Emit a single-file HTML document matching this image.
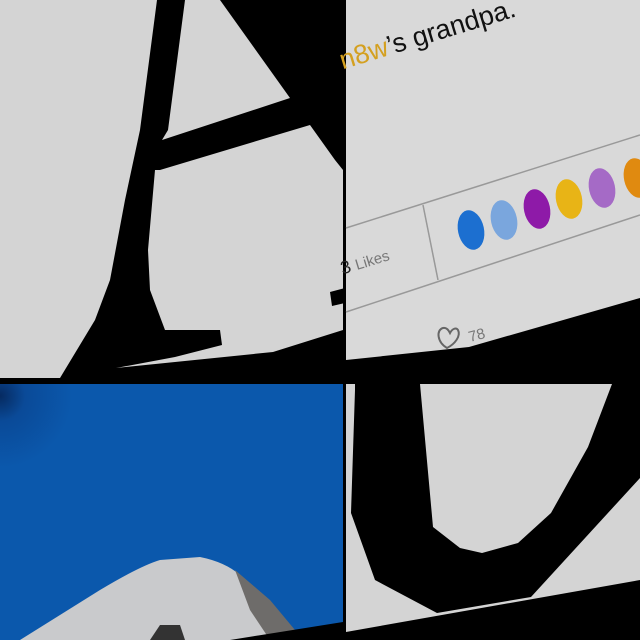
<!DOCTYPE html>
<html><head><meta charset="utf-8"><style>html,body{margin:0;padding:0;background:#000}svg{display:block}</style></head><body>
<svg width="640" height="640" viewBox="0 0 640 640" xmlns="http://www.w3.org/2000/svg">
<rect width="640" height="640" fill="#000"/>
<rect x="0" y="0" width="343" height="380" fill="#d4d4d4"/>
<path d="M157,0 L140,130 L125,200 L110,280 L95,320 L60,378 L0,380 L0,640 L343,640 L343,330 L273,352 L116,368 L175,357 L222,345 L220,330 L165,330 L150,290 L148,250 L155,170 L160,170 L310,125 L335,160 L343,170 L343,0 L220,0 L290,98 L162,140 L168,130 L185,0 Z" fill="#000"/>
<rect x="0" y="378" width="343" height="10" fill="#000"/>
<path d="M330,292 L345,288 L345,303 L332,306 Z" fill="#000"/>
<rect x="346" y="0" width="294" height="380" fill="#d9d9d9"/>
<path d="M346,360 L469,347 L640,298 L640,384 L346,384 Z" fill="#000"/>
<g transform="rotate(-17 346 60)">
<text x="340" y="68" font-family="'Liberation Sans',sans-serif" font-size="27" fill="#111"><tspan fill="#d4a020">n8w</tspan>’s grandpa.</text>
</g>
<line x1="346" y1="228" x2="640" y2="135" stroke="#999" stroke-width="1.5"/>
<line x1="346" y1="312" x2="640" y2="215" stroke="#999" stroke-width="1.5"/>
<line x1="423" y1="205" x2="438" y2="280" stroke="#999" stroke-width="1.5"/>
<g transform="rotate(-17 346 265)">
<text x="340" y="273" font-family="'Liberation Sans',sans-serif" font-size="18" fill="#222">3 <tspan fill="#777" font-size="15">Likes</tspan></text>
</g>
<ellipse cx="471" cy="230" rx="13" ry="20" fill="#1c6fd0" transform="rotate(-12 471 230)"/>
<ellipse cx="504" cy="220" rx="13" ry="20" fill="#7aa6dd" transform="rotate(-12 504 220)"/>
<ellipse cx="537" cy="209" rx="13" ry="20" fill="#8e1aa8" transform="rotate(-12 537 209)"/>
<ellipse cx="569" cy="199" rx="13" ry="20" fill="#e8b416" transform="rotate(-12 569 199)"/>
<ellipse cx="602" cy="188" rx="13" ry="20" fill="#a56ac6" transform="rotate(-12 602 188)"/>
<ellipse cx="637" cy="178" rx="13" ry="20" fill="#e08a10" transform="rotate(-12 637 178)"/>
<path d="M447,348 C437,342 436,330 443,328 C447,327 449,331 450,333 C452,329 456,327 458,330 C461,336 455,344 447,348 Z" fill="none" stroke="#666" stroke-width="2"/>
<text x="470" y="342" font-family="'Liberation Sans',sans-serif" font-size="15" fill="#777" transform="rotate(-15 470 342)">78</text>
<defs><radialGradient id="bg" cx="0" cy="0.1" r="0.6"><stop offset="0" stop-color="#062a60"/><stop offset="0.35" stop-color="#0a4a98"/><stop offset="1" stop-color="#0b58ac"/></radialGradient></defs>
<rect x="0" y="384" width="343" height="256" fill="#0b58ac"/>
<rect x="0" y="384" width="120" height="120" fill="url(#bg)"/>
<path d="M20,640 L100,590 Q140,566 160,560 L200,557 Q225,562 240,575 L280,615 L300,640 Z" fill="#c9cacc"/>
<path d="M235,570 L270,600 L295,630 L270,640 L250,610 Z" fill="#6e6c6a"/>
<path d="M150,640 L160,625 L180,625 L185,640 Z" fill="#333"/>
<path d="M230,640 L343,622 L343,640 Z" fill="#000"/>
<rect x="346" y="384" width="294" height="256" fill="#d4d4d4"/>
<path d="M355,384 L420,384 L433,527 L460,548 L482,553 L518,543 L551,513 L588,447 L612,384 L640,384 L640,478 L531,597 L437,613 L375,580 L351,513 L355,390 Z" fill="#000"/>
<path d="M346,632 L640,580 L640,640 L346,640 Z" fill="#000"/>
</svg>
</body></html>
